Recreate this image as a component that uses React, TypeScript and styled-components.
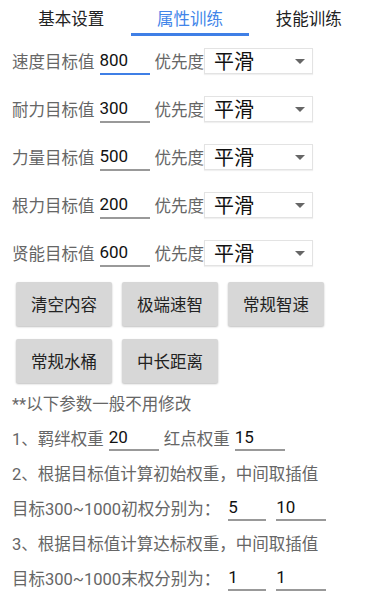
import { useState } from "react";
import styled, { createGlobalStyle } from "styled-components";

const GlobalStyle = createGlobalStyle`
  html, body {
    margin: 0;
    padding: 0;
    background: #ffffff;
  }
  body {
    font-family: "Roboto", "Noto Sans CJK SC", sans-serif;
  }
`;

const tabs = ["基本设置", "属性训练", "技能训练"];

const targets = [
  { label: "速度目标值", value: "800" },
  { label: "耐力目标值", value: "300" },
  { label: "力量目标值", value: "500" },
  { label: "根力目标值", value: "200" },
  { label: "贤能目标值", value: "600" },
];

const presets = [["清空内容", "极端速智", "常规智速"], ["常规水桶", "中长距离"]];

const App = () => {
  const [active, setActive] = useState(1);

  return (
    <Page>
      <GlobalStyle />
      <TabBar>
        {tabs.map((t, i) => (
          <Tab key={t} $active={i === active} onClick={() => setActive(i)}>
            {t}
          </Tab>
        ))}
      </TabBar>

      {targets.map((row, i) => (
        <TargetRow key={row.label}>
          <Label>{row.label}</Label>
          <Field $width={50} $focused={i === 0} defaultValue={row.value} />
          <Label $gap>优先度</Label>
          <SelectBox>
            <SelectText>平滑</SelectText>
            <Arrow />
          </SelectBox>
        </TargetRow>
      ))}

      <ButtonArea>
        {presets.map((line, i) => (
          <ButtonRow key={i}>
            {line.map((b) => (
              <PresetButton key={b}>{b}</PresetButton>
            ))}
          </ButtonRow>
        ))}
      </ButtonArea>

      <Notes>
        <NoteLine>**以下参数一般不用修改</NoteLine>
        <NoteLine>
          1、羁绊权重
          <Field $width={50} $left={5} defaultValue="20" />
          <Spacer $w={5} />
          红点权重
          <Field $width={50} $left={5} defaultValue="15" />
        </NoteLine>
        <NoteLine>2、根据目标值计算初始权重，中间取插值</NoteLine>
        <NoteLine>
          目标300~1000初权分别为：
          <Field $width={38} $left={8} defaultValue="5" />
          <Field $width={50} $left={10} defaultValue="10" />
        </NoteLine>
        <NoteLine>3、根据目标值计算达标权重，中间取插值</NoteLine>
        <NoteLine>
          目标300~1000末权分别为：
          <Field $width={38} $left={8} defaultValue="1" />
          <Field $width={50} $left={10} defaultValue="1" />
        </NoteLine>
      </Notes>
    </Page>
  );
};
export default App;

const Page = styled.div`
  width: 380px;
  height: 600px;
  overflow: hidden;
  color: #666;
`;

const TabBar = styled.div`
  display: flex;
  padding: 0 12px;
  height: 37px;
`;

const Tab = styled.div<{ $active: boolean }>`
  width: 121px;
  display: flex;
  align-items: center;
  justify-content: center;
  padding-top: 2px;
  box-sizing: border-box;
  font-size: 16.5px;
  color: ${(p) => (p.$active ? "#4285e9" : "#222")};
  border-bottom: 3px solid ${(p) => (p.$active ? "#3f7fe6" : "transparent")};
  height: 36px;
  cursor: pointer;
`;

const TargetRow = styled.div`
  display: flex;
  align-items: center;
  height: 48px;
  padding-left: 12px;
`;

const Label = styled.span<{ $gap?: boolean }>`
  font-size: 16.5px;
  color: #666;
  margin-left: ${(p) => (p.$gap ? "5px" : "0")};
`;

const Field = styled.input<{ $width: number; $focused?: boolean; $left?: number }>`
  width: ${(p) => p.$width}px;
  box-sizing: border-box;
  margin: 0 0 0 ${(p) => (p.$left ?? 5)}px;
  padding: 0;
  height: 27px;
  border: none;
  border-bottom: 2px solid ${(p) => (p.$focused ? "#3f7fe6" : "#999")};
  background: transparent;
  font-family: "Roboto", "Noto Sans", sans-serif;
  font-size: 17px;
  color: #111;
  outline: none;
  vertical-align: middle;
`;

const SelectBox = styled.div`
  width: 109px;
  height: 26px;
  box-sizing: border-box;
  display: flex;
  align-items: center;
  justify-content: space-between;
  padding: 0 5px 0 9px;
  border: 1px solid #e3e3e3;
  box-shadow: 0 1px 1px rgba(0, 0, 0, 0.06);
  background: #fff;
`;

const SelectText = styled.span`
  font-family: "Noto Sans CJK SC", sans-serif;
  font-size: 20px;
  color: #111;
  line-height: 1;
`;

const Arrow = styled.span`
  width: 0;
  height: 0;
  border-left: 5px solid transparent;
  border-right: 5px solid transparent;
  border-top: 5px solid #666;
  margin-right: 2px;
`;

const ButtonArea = styled.div`
  display: flex;
  flex-direction: column;
  gap: 13px;
  padding: 5px 0 0 16px;
`;

const ButtonRow = styled.div`
  display: flex;
  gap: 10px;
`;

const PresetButton = styled.button`
  width: 96px;
  height: 44px;
  border: none;
  border-radius: 2px;
  background: #d7d7d7;
  box-shadow: 0 1px 2px rgba(0, 0, 0, 0.25);
  font-family: "Roboto", "Noto Sans CJK SC", sans-serif;
  font-size: 16.5px;
  color: #222;
  padding: 0;
  cursor: pointer;
`;

const Notes = styled.div`
  padding: 2px 0 0 12px;
`;

const NoteLine = styled.div`
  display: flex;
  align-items: center;
  height: 35px;
  font-size: 16.5px;
  color: #666;
  white-space: nowrap;
`;

const Spacer = styled.span<{ $w: number }>`
  display: inline-block;
  width: ${(p) => p.$w}px;
`;
